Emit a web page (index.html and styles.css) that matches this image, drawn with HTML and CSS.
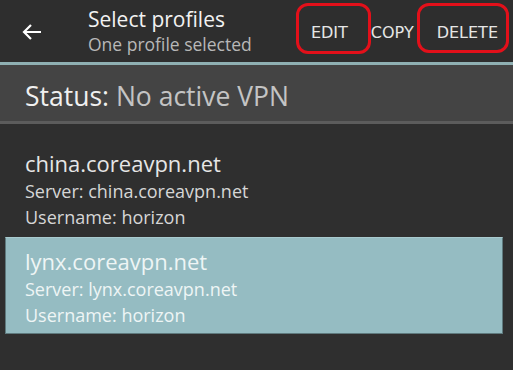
FILE: index.html
```html
<!DOCTYPE html>
<html lang="en">

<head>
    <meta charset="UTF-8">
    <meta name="viewport" content="width=device-width, initial-scale=1.0">
    <title>Select profiles</title>
    <link rel="stylesheet" href="styles.css">
</head>

<body>
    <div class="screen">
        <div class="toolbar">
            <div class="back">
                <svg width="24" height="24" viewBox="0 0 24 24">
                    <path d="M21 12H4M11 5l-7 7 7 7" fill="none" stroke="#fff" stroke-width="2.2" />
                </svg>
            </div>
            <div class="titles">
                <div class="title">Select profiles</div>
                <div class="subtitle">One profile selected</div>
            </div>
            <div class="actions">
                <span class="action edit">EDIT</span>
                <span class="action copy">COPY</span>
                <span class="action delete">DELETE</span>
            </div>
            <!-- red marks drawn over the screenshot -->
            <div class="mark mark-edit"></div>
            <div class="mark mark-delete"></div>
        </div>

        <div class="status">
            <span class="status-label">Status:</span> <span class="status-value">No active VPN</span>
        </div>

        <div class="profiles">
            <div class="profile">
                <div class="profile-name">china.coreavpn.net</div>
                <div class="profile-info">Server: china.coreavpn.net</div>
                <div class="profile-info">Username: horizon</div>
            </div>
            <div class="profile selected">
                <div class="profile-name">lynx.coreavpn.net</div>
                <div class="profile-info">Server: lynx.coreavpn.net</div>
                <div class="profile-info">Username: horizon</div>
            </div>
        </div>
    </div>
</body>

</html>
```

FILE: styles.css
```css
* {
    box-sizing: border-box;
}

body {
    margin: 0;
    background-color: #2f2f2f;
    font-family: "Open Sans", "Noto Sans", sans-serif;
}

.screen {
    width: 513px;
    height: 370px;
    overflow: hidden;
    background-color: #2f2f2f;
}

.toolbar {
    position: relative;
    display: flex;
    align-items: center;
    height: 65px;
    background-color: #2e2e2e;
    border-bottom: 3px solid #8fb0b3;
}

.back {
    width: 88px;
    padding-left: 20px;
    padding-top: 2px;
    display: flex;
    align-items: center;
}

.titles {
    flex: 1;
    margin-top: -2px;
}

.title {
    font-size: 21px;
    line-height: 27px;
    color: #f2f2f2;
}

.subtitle {
    font-size: 17.5px;
    line-height: 22px;
    color: #b8b8b8;
}

.actions {
    display: flex;
    align-items: center;
    gap: 23px;
    padding-right: 15px;
    padding-top: 2px;
}

.action {
    font-family: "DejaVu Sans", sans-serif;
    font-size: 16px;
    color: #e6e6e6;
}

.mark {
    position: absolute;
    border: 3px solid #e3101a;
    border-radius: 12px;
}

.mark-edit {
    left: 296px;
    top: 3px;
    width: 75px;
    height: 51px;
}

.mark-delete {
    left: 417px;
    top: 3px;
    width: 92px;
    height: 50px;
}

.status {
    height: 59px;
    padding: 15px 25px 0;
    background-color: #444444;
    border-bottom: 3px solid #5c5c5c;
    font-size: 26.5px;
    line-height: 32px;
}

.status-label {
    color: #f0f0f0;
}

.status-value {
    color: #c4c4c4;
}

.profiles {
    padding: 24px 10px 0 5px;
}

.profile {
    padding: 0 20px 7px;
}

.profile.selected {
    padding: 8px 19px 5px;
    background-color: #95bcc2;
    border: 1px solid #5f7a7e;
    border-top-color: #a8cace;
}

.profile-name {
    font-size: 22px;
    line-height: 30px;
    color: #e6e6e6;
}

.profile-info {
    font-size: 18px;
    line-height: 26px;
    color: #d6d6d6;
}

.selected .profile-name,
.selected .profile-info {
    color: #eef5f5;
}
```
